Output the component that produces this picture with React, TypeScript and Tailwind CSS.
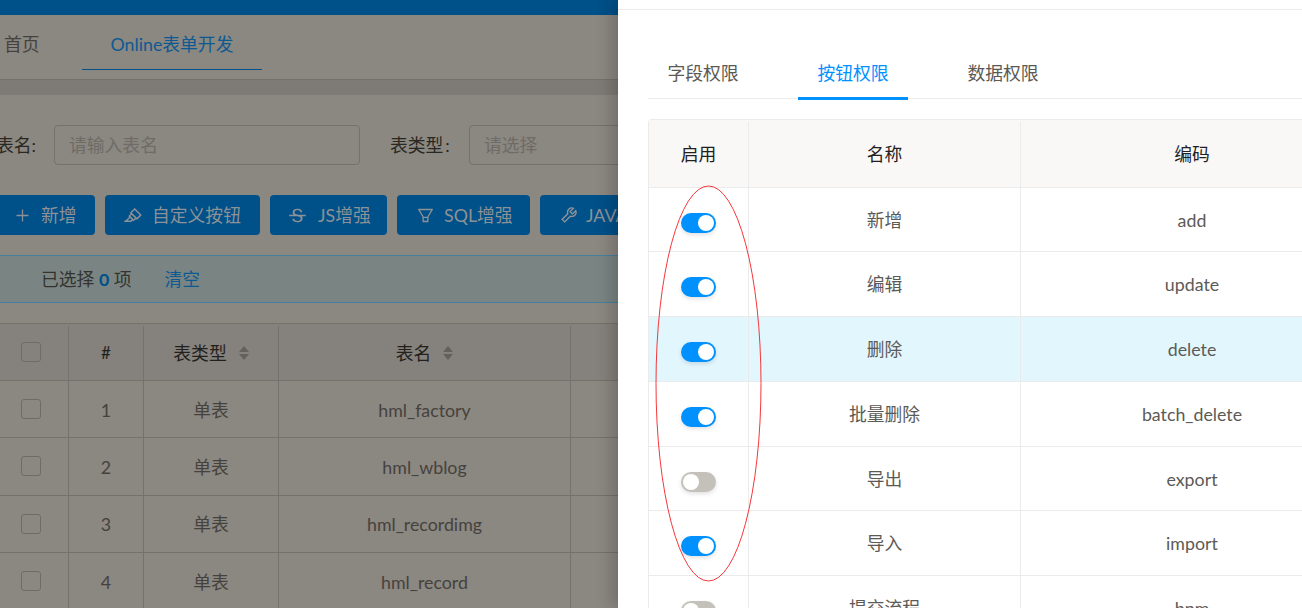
import type { ReactNode } from 'react';
import {
  AiOutlineFilter,
  AiOutlineHighlight,
  AiOutlinePlus,
  AiOutlineStrikethrough,
  AiOutlineTool,
} from 'react-icons/ai';

const fontStack = { fontFamily: 'Lato, "Noto Sans CJK SC", sans-serif' };

const toolbar = [
  { label: '新增', icon: <AiOutlinePlus size={17} />, width: 'w-[99px] -ml-[4px] gap-[10px] pl-[18px]' },
  { label: '自定义按钮', icon: <AiOutlineHighlight size={20} />, width: 'w-[155px] gap-[9px] pl-[18px]' },
  { label: 'JS增强', icon: <AiOutlineStrikethrough size={19} />, width: 'w-[117px] gap-[11px] pl-[18px]' },
  { label: 'SQL增强', icon: <AiOutlineFilter size={19} />, width: 'w-[133px] gap-[9px] pl-[19px]' },
  { label: 'JAVA增强', icon: <AiOutlineTool size={20} />, width: 'w-[140px] gap-[7px] pl-[19px]' },
];

const tables = ['hml_factory', 'hml_wblog', 'hml_recordimg', 'hml_record'];

const perms = [
  { name: '新增', code: 'add', on: true, height: 'h-[64px]' },
  { name: '编辑', code: 'update', on: true, height: 'h-[65px]' },
  { name: '删除', code: 'delete', on: true, height: 'h-[65px]', hover: true },
  { name: '批量删除', code: 'batch_delete', on: true, height: 'h-[65px]' },
  { name: '导出', code: 'export', on: false, height: 'h-[64px]' },
  { name: '导入', code: 'import', on: true, height: 'h-[65px]' },
  { name: '提交流程', code: 'bpm', on: false, height: 'h-[65px]' },
];

function Checkbox() {
  return <span className="block h-[20px] w-[20px] rounded-[3px] border border-[#6f6c67]" />;
}

function SortCaret() {
  return (
    <svg width="10" height="16" viewBox="0 0 10 16" className="ml-[12px] shrink-0">
      <path d="M5 1 L10 7 H0 Z M0 9 H10 L5 15 Z" fill="#64615c" />
    </svg>
  );
}

function Toggle({ on }: { on: boolean }) {
  return (
    <span
      className={`mt-[6px] flex h-[20px] w-[35px] items-center rounded-full px-[2px] shadow-[0_2px_4px_rgba(0,0,0,0.12)] ${
        on ? 'justify-end bg-[#0091ff]' : 'justify-start bg-[#c4c1bb]'
      }`}
    >
      <span className="h-[16px] w-[16px] rounded-full bg-white" />
    </span>
  );
}

function LeftCell({ children, className = '' }: { children: ReactNode; className?: string }) {
  return (
    <div className={`flex items-center justify-center border-r border-[#75726d] ${className}`}>{children}</div>
  );
}

export default function App() {
  return (
    <div className="relative flex h-screen w-full overflow-hidden bg-[#8b8781] text-[17.8px]" style={fontStack}>
      {/* dimmed page behind the drawer */}
      <div className="w-[618px] shrink-0 overflow-hidden">
        <div className="h-[15px] bg-[#005089]" />
        <div className="flex h-[65px] border-b border-[#75726d] pl-[4px]">
          <span className="mt-[16px] h-fit w-[78px] text-[#45423e]">首页</span>
          <div className="h-[55px] w-[180px] border-b border-[#005089] pt-[16px] text-center text-[#0d5a92]">
            Online表单开发
          </div>
        </div>
        <div className="h-[15px] bg-[#7e7b76]" />

        <div className="mt-[30px] flex h-[40px] w-[700px] items-center">
          <span className="-ml-[4px] w-[40px] text-right whitespace-nowrap text-[#2a2723]">表名:</span>
          <div className="ml-[18px] flex h-full w-[306px] items-center rounded-[4px] border border-[#75726d] px-[14px] text-[#6f6b66]">
            请输入表名
          </div>
          <span className="ml-[30px] w-[60px] whitespace-nowrap text-[#2a2723]">
            表类型<span className="ml-[2px]">:</span>
          </span>
          <div className="ml-[19px] flex h-full w-[200px] items-center rounded-[4px] border border-[#75726d] px-[14px] text-[#6f6b66]">
            请选择
          </div>
        </div>

        <div className="mt-[30px] flex h-[40px] w-[800px] gap-[10px]">
          {toolbar.map((b) => (
            <div
              key={b.label}
              className={`flex items-center rounded-[4px] bg-[#005089] whitespace-nowrap text-[#8d9296] ${b.width}`}
            >
              {b.icon}
              {b.label}
            </div>
          ))}
        </div>

        <div className="mt-[20px] flex h-[48px] items-center border-y border-[#47809f] bg-[#7a8583] pl-[41px] text-[#34332f]">
          <span>
            已选择 <b className="text-[#005089]">0</b> 项
          </span>
          <span className="ml-[33px] text-[#0d5a92]">清空</span>
        </div>

        <div className="mt-[20px] border-t border-[#75726d]">
          <div className="grid h-[57px] grid-cols-[69px_75px_135px_292px_1fr] border-b border-[#75726d] bg-[#85817c] pt-[2px] text-[#221f1c]">
            <LeftCell>
              <span className="-mt-[2px] -ml-[6px]">
                <Checkbox />
              </span>
            </LeftCell>
            <LeftCell className="text-[17px]">#</LeftCell>
            <LeftCell>
              表类型
              <SortCaret />
            </LeftCell>
            <LeftCell>
              表名
              <SortCaret />
            </LeftCell>
            <div />
          </div>
          {tables.map((t, i) => (
            <div
              key={t}
              className="grid h-[57.3px] grid-cols-[69px_75px_135px_292px_1fr] border-b border-[#75726d] text-[#45423e]"
            >
              <LeftCell>
                <span className="-ml-[6px]">
                  <Checkbox />
                </span>
              </LeftCell>
              <LeftCell className="pt-[2px]">{i + 1}</LeftCell>
              <LeftCell className="pt-[2px]">单表</LeftCell>
              <LeftCell className="pt-[2px]">{t}</LeftCell>
              <div />
            </div>
          ))}
        </div>
      </div>

      {/* permissions drawer */}
      <div className="relative z-10 w-[684px] shrink-0 overflow-hidden bg-white pl-[30px] shadow-[-6px_0_16px_rgba(0,0,0,0.2)]">
        <div className="-ml-[30px] h-[10px] border-b border-[#ebebeb]" />
        <div className="mt-[40px] flex h-[49px] gap-[40px] border-b border-[#ebebeb]">
          <div className="h-[48px] w-[110px] pt-[10px] text-center text-[#5b5954]">字段权限</div>
          <div className="h-[50px] w-[110px] border-b-[3px] border-[#0091ff] pt-[10px] text-center text-[#0091ff]">
            按钮权限
          </div>
          <div className="h-[48px] w-[110px] pt-[10px] text-center text-[#5b5954]">数据权限</div>
        </div>

        <div className="mt-[20px] w-[715px] rounded-tl-[4px] border-t border-l border-[#ebebeb]">
          <div className="grid h-[68px] grid-cols-[100px_272px_1fr] border-b border-[#ebebeb] bg-[#f9f8f6] pt-[2px] text-[#23211e]">
            <div className="flex items-center justify-center border-r border-[#ebebeb]">启用</div>
            <div className="flex items-center justify-center border-r border-[#ebebeb]">名称</div>
            <div className="flex items-center justify-center">编码</div>
          </div>
          {perms.map((p) => (
            <div
              key={p.code}
              className={`grid grid-cols-[100px_272px_1fr] border-b border-[#ebebeb] text-[#5c5a56] ${p.height} ${
                p.hover ? 'bg-[#e2f6fe]' : ''
              }`}
            >
              <div className="flex items-center justify-center border-r border-[#ebebeb]">
                <Toggle on={p.on} />
              </div>
              <div className="flex items-center justify-center border-r border-[#ebebeb] pt-[1px]">{p.name}</div>
              <div className="flex items-center justify-center pt-[1px]">{p.code}</div>
            </div>
          ))}
        </div>
      </div>

      {/* red hand-drawn annotation on the screenshot */}
      <svg className="absolute top-0 left-0 z-20" width="1302" height="608" fill="none">
        <ellipse cx="708.5" cy="383.5" rx="52.5" ry="197.5" stroke="#f5373a" strokeWidth="1" />
      </svg>
    </div>
  );
}
